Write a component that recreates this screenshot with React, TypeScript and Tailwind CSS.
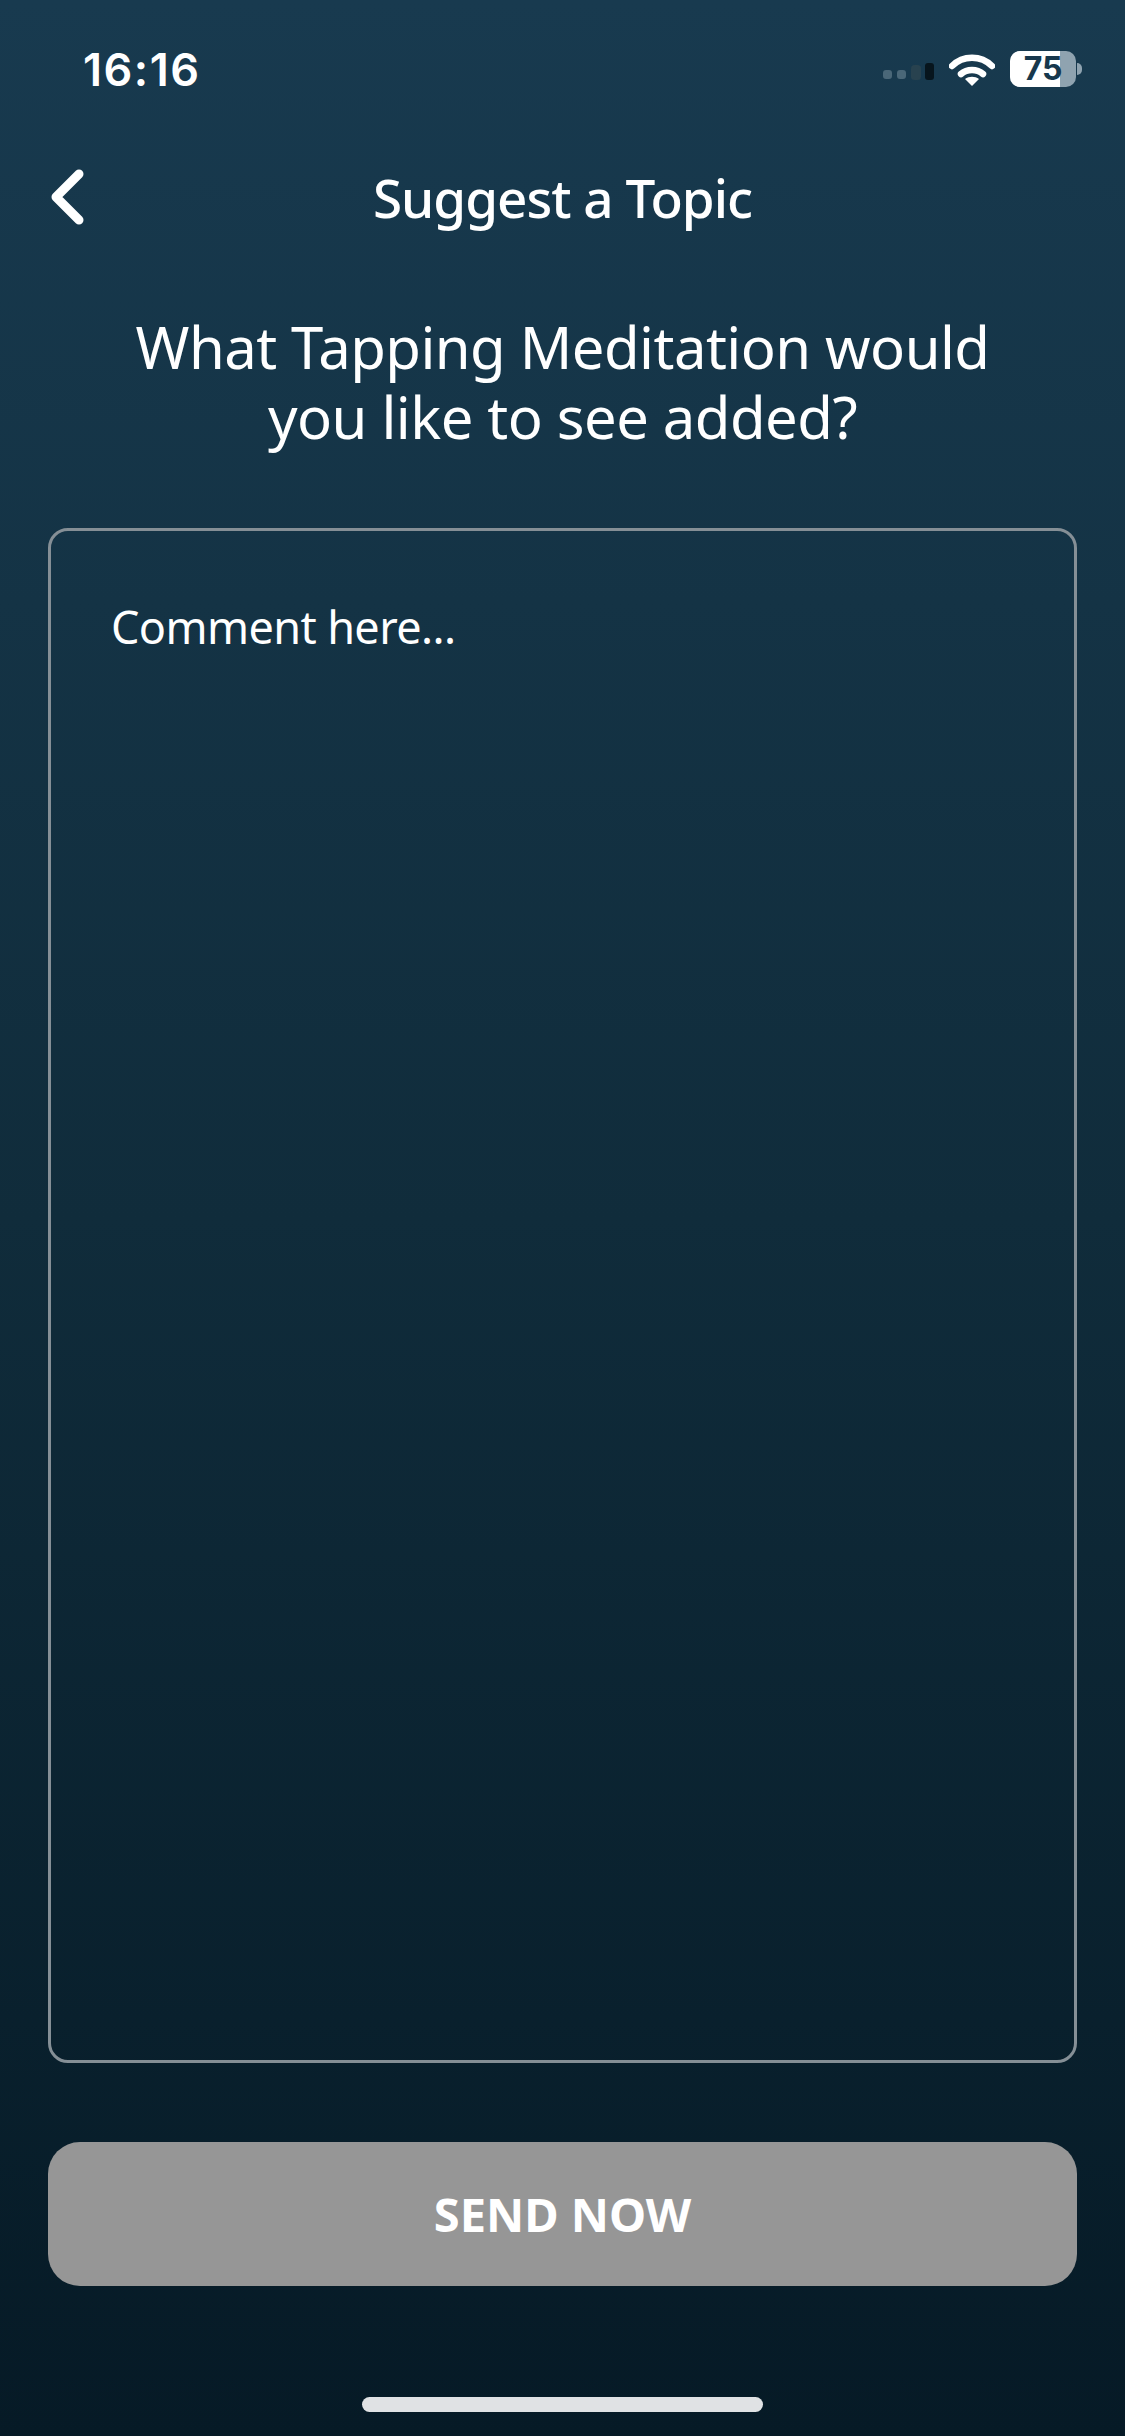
export default function App() {
  return (
    <div className="flex h-[2436px] w-[1125px] flex-col overflow-hidden bg-gradient-to-b from-[#183a4f] via-[#102c3b] to-[#061a26] font-['Noto_Sans',sans-serif] text-white">
      {/* Status bar */}
      <div className="flex h-[138px] shrink-0 items-center justify-between pl-[83px] pr-[43px]">
        <span className="font-['Inter',sans-serif] text-[45px] font-semibold leading-none tracking-[1.5px]">16:16</span>
        <div className="flex items-center">
          <svg width="52" height="18" viewBox="0 0 52 18" className="mt-[5px]">
            <rect x="0" y="7" width="9" height="9" rx="3" fill="#4a6778" />
            <rect x="14" y="7" width="9" height="9" rx="3" fill="#4a6778" />
            <rect x="28" y="2" width="10" height="15" rx="3.5" fill="#28424f" />
            <rect x="42" y="0" width="9" height="17" rx="3" fill="#07151d" />
          </svg>
          <svg width="46" height="34" viewBox="0 0 46 34" className="ml-[14px]">
            <path d="M3 14 C 14 3, 32 3, 43 14" fill="none" stroke="white" strokeWidth="6.5" strokeLinecap="round" />
            <path d="M12 22 C 18 16.5, 28 16.5, 34 22" fill="none" stroke="white" strokeWidth="6.5" strokeLinecap="round" />
            <path d="M23 34 L16 27 C 20 24, 26 24, 30 27 Z" fill="white" />
          </svg>
          <div className="relative ml-[15px] flex h-[36px] w-[66px] items-center justify-center rounded-[10px] bg-[#8fa3b0]">
            <div className="absolute inset-y-0 left-0 w-[50px] rounded-l-[10px] bg-white" />
            <span className="relative font-['Inter',sans-serif] text-[32px] font-bold leading-none text-[#17384d]">75</span>
          </div>
          <div className="ml-[1px] h-[12px] w-[5px] rounded-r-full bg-[#8fa3b0]" />
        </div>
      </div>

      {/* Nav */}
      <div className="relative flex h-[120px] shrink-0 items-center justify-center pb-[2px]">
        <svg width="40" height="60" viewBox="0 0 40 60" className="absolute left-[48px] top-[30px]">
          <path d="M31 6 L8 29 L31 52" fill="none" stroke="white" strokeWidth="9" strokeLinecap="round" strokeLinejoin="round" />
        </svg>
        <h1 className="text-[53px] font-medium leading-none tracking-[-1px]">Suggest a Topic</h1>
      </div>

      {/* Question */}
      <h2 className="mt-[54px] text-center text-[58px] leading-[70px] tracking-[-0.55px]">
        What Tapping Meditation would
        <br />
        you like to see added?
      </h2>

      {/* Comment box */}
      <div className="mx-[48px] mt-[76px] h-[1535px] shrink-0 rounded-[20px] border-[3px] border-[#858f96] px-[60px] pt-[66px]">
        <p className="text-[45px] leading-[60px] tracking-[-0.6px]">Comment here...</p>
      </div>

      {/* Send */}
      <button className="mx-[48px] mt-[79px] flex h-[144px] shrink-0 items-center justify-center rounded-[32px] bg-[#969696] text-[47px] font-bold text-white">
        SEND NOW
      </button>

      {/* Home indicator */}
      <div className="mx-auto mt-[111px] h-[15px] w-[401px] shrink-0 rounded-full bg-[#e0e2e4]" />
    </div>
  );
}
